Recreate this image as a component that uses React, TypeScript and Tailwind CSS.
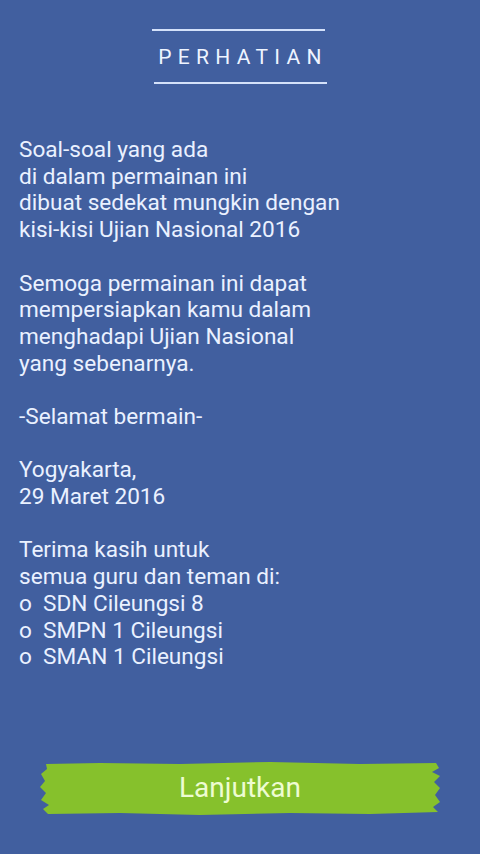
import React from 'react';

const paragraphs: string[][] = [
  ['Soal-soal yang ada', 'di dalam permainan ini', 'dibuat sedekat mungkin dengan', 'kisi-kisi Ujian Nasional 2016'],
  ['Semoga permainan ini dapat', 'mempersiapkan kamu dalam', 'menghadapi Ujian Nasional', 'yang sebenarnya.'],
  ['-Selamat bermain-'],
  ['Yogyakarta,', '29 Maret 2016'],
  ['Terima kasih untuk', 'semua guru dan teman di:', 'o  SDN Cileungsi 8', 'o  SMPN 1 Cileungsi', 'o  SMAN 1 Cileungsi'],
];

function BrushButton() {
  return (
    <button type="button" className="relative mx-[40px] flex h-[56px] items-center justify-center">
      <svg className="absolute inset-0 h-full w-full" viewBox="0 0 400 56" preserveAspectRatio="none">
        <path
          d="M6 4 L60 3 L140 4 L230 2 L320 4 L396 3 L399 8 L392 12 L400 16 L394 22 L400 28 L395 35 L400 42 L393 47 L398 52 L330 54 L250 53 L160 55 L80 53 L8 54 L3 49 L9 45 L1 40 L6 33 L0 27 L5 21 L1 14 L7 9 Z"
          fill="#86c12c"
        />
      </svg>
      <span className="relative text-[28px] text-[#eefcd2]">Lanjutkan</span>
    </button>
  );
}

export default function App() {
  return (
    <div
      className="flex h-[854px] w-[480px] flex-col bg-[#415f9f] text-[#eaf1ff]"
      style={{ fontFamily: 'Roboto, "Noto Sans", sans-serif' }}
    >
      <div className="mt-[29px] flex flex-col items-center">
        <div className="ml-[-3px] h-[2px] w-[173px] bg-[#d4e1fa]" />
        <h1 className="mt-[13px] pl-[6px] text-[21px] leading-[26px] tracking-[0.3em] text-[#eef4ff]">PERHATIAN</h1>
        <div className="mt-[12px] h-[2px] w-[173px] bg-[#d4e1fa]" />
      </div>

      <div className="mt-[53px] flex flex-col gap-[26.7px] px-[19px] text-[22.6px] leading-[26.7px]">
        {paragraphs.map((lines, i) => (
          <p key={i}>
            {lines.map((l) => (
              <span key={l} className="block whitespace-pre">
                {l}
              </span>
            ))}
          </p>
        ))}
      </div>

      <div className="mt-auto mb-[38px] flex flex-col">
        <BrushButton />
      </div>
    </div>
  );
}
